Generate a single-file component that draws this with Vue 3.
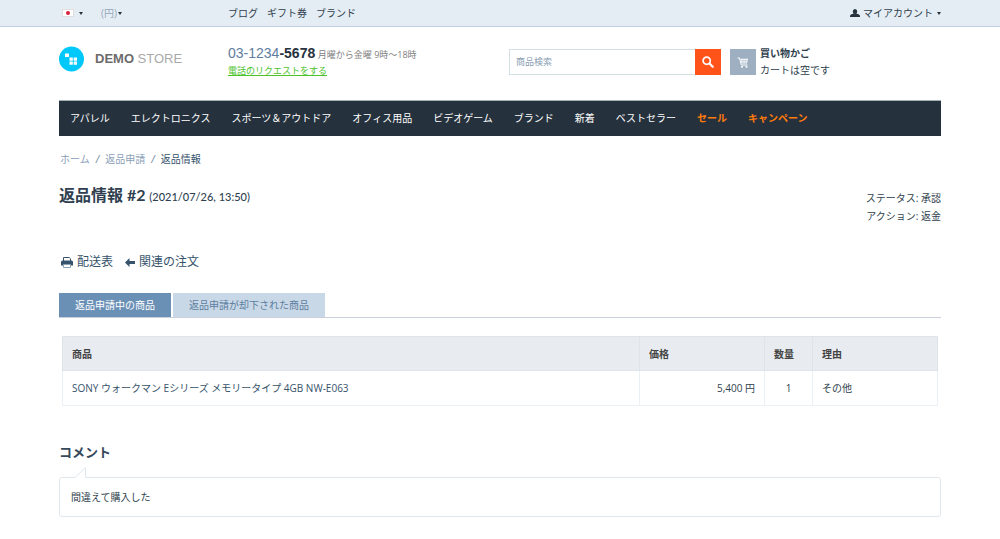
<script setup>
import { ref } from 'vue'

const search = ref('')
const activeTab = ref(0)
const quickLinks = ['ブログ', 'ギフト券', 'ブランド']
const categories = [
  { name: 'アパレル' },
  { name: 'エレクトロニクス' },
  { name: 'スポーツ＆アウトドア' },
  { name: 'オフィス用品' },
  { name: 'ビデオゲーム' },
  { name: 'ブランド' },
  { name: '新着' },
  { name: 'ベストセラー' },
  { name: 'セール', hot: true },
  { name: 'キャンペーン', hot: true },
]
const tabs = ['返品申請中の商品', '返品申請が却下された商品']
const items = [
  { name: 'SONY ウォークマン Eシリーズ メモリータイプ 4GB NW-E063', price: '5,400 円', qty: 1, reason: 'その他' },
]
</script>

<template>
  <div class="page">
    <div class="topbar">
      <div class="wrap columns">
        <div class="selectors">
          <button class="plain language" aria-label="言語">
            <span class="flag"><i></i></span><span class="caret"></span>
          </button>
          <button class="plain currency">(円)<span class="caret"></span></button>
        </div>
        <nav class="quick">
          <a v-for="link in quickLinks" :key="link" href="#">{{ link }}</a>
        </nav>
        <button class="plain account">
          <svg width="10" height="8" viewBox="0 0 10 8" aria-hidden="true">
            <ellipse cx="5" cy="2.500" rx="2.200" ry="2.500" fill="#26323e" />
            <path d="M0 8V7Q0 5.600 1.500 5.200L3.700 4.500H6.300L8.500 5.200Q10 5.600 10 7V8Z" fill="#26323e" />
          </svg>
          マイアカウント<span class="caret"></span>
        </button>
      </div>
    </div>

    <header class="wrap columns header">
      <a class="logo" href="#" aria-label="DEMO STORE">
        <svg width="25" height="26" viewBox="0 0 25 26" aria-hidden="true">
          <circle cx="12.500" cy="13" r="12.500" fill="#00c8fa" />
          <path d="M6 7.500h4v3.500H6zM10.500 11.500h3.300v3.200h-3.300zM14.700 11.500H18v3.200h-3.300zM10.500 15.500h3.300v3.300h-3.300zM14.700 15.500H18v3.300h-3.300z" fill="#fff" />
        </svg>
        <span><b>DEMO</b> STORE</span>
      </a>
      <div class="phone">
        <div><span class="number">03-1234<b>-5678</b></span> <span class="hours">月曜から金曜 9時〜18時</span></div>
        <a class="callback" href="#">電話のリクエストをする</a>
      </div>
      <form class="search" role="search" @submit.prevent>
        <input v-model="search" type="text" placeholder="商品検索" aria-label="商品検索" />
        <button aria-label="検索">
          <svg width="12" height="12" viewBox="0 0 12 12" fill="none" stroke="#fff" aria-hidden="true">
            <circle cx="4.700" cy="4.700" r="3.600" stroke-width="1.700" />
            <path d="M7.500 7.500L10.700 10.700" stroke-width="2.200" stroke-linecap="round" />
          </svg>
        </button>
      </form>
      <a class="cart" href="#">
        <span class="cart-icon">
          <svg width="12" height="11" viewBox="0 0 12 11" aria-hidden="true">
            <path d="M0.500 1H2.500L4.300 8H10.500" fill="none" stroke="#fff" />
            <path d="M3.500 1.800H11L10 6.500H4.500Z" fill="#fff" />
            <path d="M4 3.500H10.500M4.300 5H10.300M6 2V6.500M8.300 2V6.500" stroke="#9dafc0" stroke-width="0.400" />
            <circle cx="5" cy="9.700" r="1" fill="#fff" />
            <circle cx="9.500" cy="9.700" r="1" fill="#fff" />
          </svg>
        </span>
        <span class="cart-text"><b>買い物かご</b><span>カートは空です</span></span>
      </a>
    </header>

    <main class="wrap">
      <nav class="menu">
        <a v-for="c in categories" :key="c.name" href="#" :class="{ hot: c.hot }">{{ c.name }}</a>
      </nav>

      <nav class="crumbs">
        <a href="#">ホーム</a><i>/</i><a href="#">返品申請</a><i>/</i><span>返品情報</span>
      </nav>

      <div class="title">
        <h1>返品情報 #2 <small>(2021/07/26, 13:50)</small></h1>
        <div class="status">
          <div>ステータス: 承認</div>
          <div>アクション: 返金</div>
        </div>
      </div>

      <div class="actions">
        <a href="#">
          <svg width="12" height="11" viewBox="0 0 12 11" aria-hidden="true">
            <path d="M2.500 4V0.500H8.200L9.500 1.800V4" fill="#fff" stroke="#36536b" />
            <path d="M1.500 3.500H10.500Q12 3.500 12 5V8.500H0V5Q0 3.500 1.500 3.500Z" fill="#36536b" />
            <path d="M2.500 7.500H9.500V10.500H2.500Z" fill="#fff" stroke="#8fa2b2" />
          </svg>
          配送表
        </a>
        <a href="#">
          <svg width="10" height="9" viewBox="0 0 10 9" aria-hidden="true">
            <path d="M0 4.500L4.500 0V3H10V6H4.500V9Z" fill="#36536b" />
          </svg>
          関連の注文
        </a>
      </div>

      <div class="tabs" role="tablist">
        <button
          v-for="(t, i) in tabs"
          :key="t"
          role="tab"
          :aria-selected="activeTab === i"
          :class="{ active: activeTab === i }"
          @click="activeTab = i"
        >{{ t }}</button>
      </div>

      <div class="panel">
        <table>
          <thead>
            <tr><th class="product">商品</th><th class="price">価格</th><th class="qty">数量</th><th class="reason">理由</th></tr>
          </thead>
          <tbody>
            <tr v-for="item in items" :key="item.name">
              <td><a href="#">{{ item.name }}</a></td>
              <td class="right">{{ item.price }}</td>
              <td class="center">{{ item.qty }}</td>
              <td>{{ item.reason }}</td>
            </tr>
          </tbody>
        </table>
      </div>

      <h2>コメント</h2>
      <div class="comment">
        <svg class="tip" width="12" height="11" viewBox="0 0 12 11" aria-hidden="true">
          <path d="M0 10.500L10.500 0.500V10.500V11H0Z" fill="#fff" />
          <path d="M0 10.500L10.500 0.500V10.500" fill="none" stroke="#e1e8ed" />
        </svg>
        間違えて購入した
      </div>
    </main>
  </div>
</template>

<style>
body {
  background: #fff;
}
</style>

<style scoped>
.page {
  font: 10px/18px "Open Sans", "Noto Sans CJK JP", sans-serif;
  color: #2f3f4e;
}
.page * {
  box-sizing: border-box;
}
a {
  color: inherit;
  text-decoration: none;
}
button,
input {
  font: inherit;
  color: inherit;
  border: 0;
  padding: 0;
  margin: 0;
}
.plain {
  background: none;
  display: flex;
  align-items: center;
}
.wrap {
  padding: 0 59px;
}
.columns {
  display: grid;
  grid-template-columns: 169fr 281fr 221fr 211fr;
}
.topbar {
  background: #e5edf4;
  border-bottom: 1px solid #bfd1e1;
}
.topbar .columns {
  height: 26px;
  align-items: center;
}
.selectors {
  display: flex;
  gap: 18px;
  padding-left: 3px;
}
.flag {
  width: 12px;
  height: 8px;
  background: #fff;
  border: 1px solid #e0dede;
  display: flex;
  align-items: center;
  justify-content: center;
}
.flag i {
  width: 4px;
  height: 4px;
  border-radius: 50%;
  background: #d8203c;
}
.caret {
  border: 2px solid transparent;
  border-top: 3px solid #26323e;
  border-bottom: 0;
  margin-left: 5px;
}
.currency {
  color: #96a9bb;
}
.currency .caret {
  margin-left: 1px;
}
.quick {
  display: flex;
  gap: 9px;
}
.account {
  grid-column: 4;
  justify-self: end;
  gap: 3px;
}
.account .caret {
  margin-left: 1px;
}
.header {
  padding-top: 18px;
  height: 73px;
}
.logo {
  display: flex;
  align-items: center;
  gap: 11px;
  height: 28px;
  font: 13px/18px "Liberation Sans", Arial, sans-serif;
  color: #a9a9a9;
}
.logo b {
  color: #6b6b6b;
}
.phone {
  line-height: 16px;
  white-space: nowrap;
}
.number {
  font: 14px/16px "Liberation Sans", Arial, sans-serif;
  color: #5f7d9e;
}
.number b {
  color: #26323e;
}
.hours {
  font-size: 9px;
  color: #808080;
}
.callback {
  display: block;
  font-size: 9px;
  color: #4cc32b;
  text-decoration: underline;
}
.search {
  display: flex;
  height: 26px;
  margin: 4px 9px 0 0;
}
.search input {
  flex: 1;
  min-width: 0;
  border: 1px solid #d3e0e6;
  border-right: 0;
  padding: 0 6px;
  font-size: 9px;
}
.search input::placeholder {
  color: #8ba0b4;
}
.search button {
  width: 26px;
  background: #ff5319;
  display: flex;
  align-items: center;
  justify-content: center;
}
.cart {
  display: flex;
  align-items: flex-start;
  gap: 4px;
}
.cart-icon {
  width: 26px;
  height: 26px;
  margin-top: 4px;
  background: #9dafc0;
  display: flex;
  align-items: center;
  justify-content: center;
}
.cart-text {
  display: flex;
  flex-direction: column;
  line-height: 17px;
}
.menu {
  display: flex;
  gap: 21px;
  padding: 0 11px;
  background: #25313d;
  border-top: 1px solid #a5b1b5;
  color: #fff;
  line-height: 35px;
}
.menu .hot {
  color: #ff7b0c;
  font-weight: bold;
}
.crumbs {
  display: flex;
  gap: 6px;
  padding: 14px 1px 0;
  color: #8ba0b8;
}
.crumbs i {
  color: #6b8299;
}
.crumbs span {
  color: #36536b;
}
.title {
  display: flex;
  justify-content: space-between;
  padding-top: 15px;
}
h1 {
  margin: 0;
  font: bold 16px/24px Lato, "Noto Sans CJK JP", sans-serif;
  color: #2f3f4f;
}
h1 small {
  font-size: 11px;
  font-weight: 500;
}
.status {
  padding-top: 6px;
  text-align: right;
}
.actions {
  display: flex;
  gap: 12px;
  padding: 27px 2px 0;
  font-size: 12px;
  line-height: 20px;
  color: #36536b;
}
.actions a {
  display: flex;
  align-items: center;
  gap: 4px;
}
.tabs {
  display: flex;
  gap: 2px;
  margin-top: 21px;
  border-bottom: 1px solid #c9d0db;
}
.tabs button {
  padding: 0 16px;
  line-height: 24px;
  background: #c9d8e7;
  color: #5b7da0;
}
.tabs .active {
  background: #6b90b6;
  color: #fff;
}
.panel {
  padding: 18px 3px 0;
}
table {
  width: 100%;
  table-layout: fixed;
  border-collapse: collapse;
  border: 1px solid #eaf0f3;
}
th,
td {
  height: 35px;
  padding: 0 9px;
  text-align: left;
  border: 1px solid #eaf0f3;
}
th {
  height: 34px;
  background: #e8ecf0;
  border-color: #dde5ea;
  color: #444;
}
.price {
  width: 125px;
}
.qty {
  width: 48px;
}
.reason {
  width: 125px;
}
td a {
  color: #36536b;
}
.right {
  text-align: right;
}
.center {
  text-align: center;
}
h2 {
  margin: 35px 0 0;
  font-size: 13px;
  line-height: 22px;
  color: #36495c;
}
.comment {
  position: relative;
  margin-top: 14px;
  padding: 10px 11px;
  border: 1px solid #e1e8ed;
  border-radius: 3px;
}
.tip {
  position: absolute;
  left: 15px;
  top: -11px;
}
</style>
